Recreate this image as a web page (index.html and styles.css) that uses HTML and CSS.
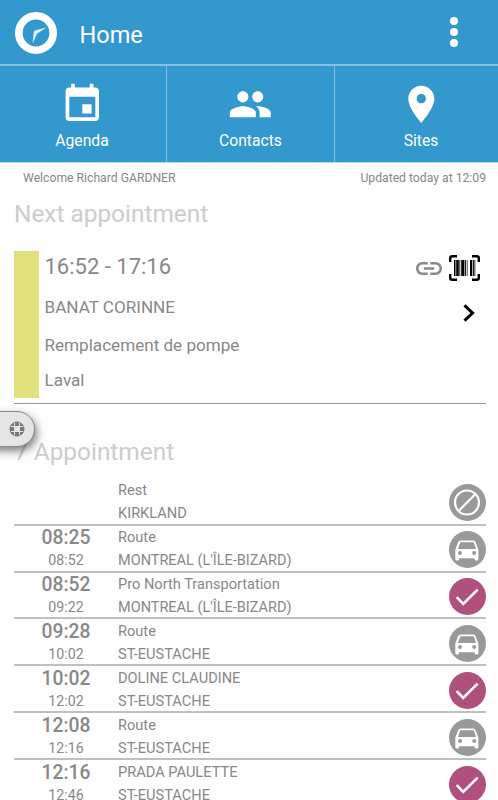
FILE: index.html
```html
<!DOCTYPE html>
<html lang="en">
<head>
<meta charset="utf-8">
<title>Home</title>
<link rel="stylesheet" href="styles.css">
</head>
<body>
<svg class="sprite" aria-hidden="true">
  <symbol id="off" viewBox="0 0 37 37"><circle cx="18.5" cy="18.5" r="18.5" fill="#999"/><circle cx="18" cy="18.5" r="12" fill="none" stroke="#fff" stroke-width="2.2"/><path d="M10 26.5L26 10.5" stroke="#fff" stroke-width="2.2"/></symbol>
  <symbol id="car" viewBox="0 0 37 37"><circle cx="18.5" cy="18.5" r="18.5" fill="#999"/><path fill="#fff" fill-rule="evenodd" d="M10.500 10Q11 9.500 12 9.500h12.500q1.500 0 2 1.500l2.900 7.800v9.500q0 1.200-1.200 1.200h-1.300q-1.200 0-1.200-1.200V27.300H10v1q0 1.200-1.200 1.200H7.500q-1.200 0-1.200-1.200v-9.500l2.800-7.500q.4-1 1.400-1.300zM11.300 11.300l-2.400 6.700h18.200l-2.400-6.700zM11 20a2 2 0 1 0 0 4 2 2 0 0 0 0-4zm14.200 0a2 2 0 1 0 0 4 2 2 0 0 0 0-4z"/></symbol>
  <symbol id="done" viewBox="0 0 37 37"><circle cx="18.5" cy="18.500" r="18.5" fill="#b0507f"/><path d="M7.700 19.200l6.500 6.800L28.600 11.700" fill="none" stroke="#fff" stroke-width="2.600"/></symbol>
</svg>
<header class="topbar">
  <svg class="logo" viewBox="0 0 42 42"><circle cx="21" cy="21" r="17.200" fill="none" stroke="#fff" stroke-width="7.600"/><path d="M31.500 15.500L20.500 18.300Q19 18.800 18.800 20L17.500 31.500 22 21.700z" fill="#fff" fill-opacity=".85"/></svg>
  <h1 class="title">Home</h1>
  <svg class="more" viewBox="0 0 10 32"><circle cx="5" cy="5" r="4"/><circle cx="5" cy="16" r="4"/><circle cx="5" cy="27" r="4"/></svg>
</header>
<nav class="tabs">
  <a class="tab tab-first"><svg viewBox="0 0 24 24"><path d="M17 12h-5v5h5v-5zM16 1v2H8V1H6v2H5c-1.110 0-1.990.9-1.990 2L3 19c0 1.100.89 2 2 2h14c1.100 0 2-.9 2-2V5c0-1.100-.9-2-2-2h-1V1h-2zm3 18H5V8h14v11z"/></svg><span>Agenda</span></a>
  <a class="tab"><svg viewBox="0 0 24 24"><path d="M16 11c1.660 0 2.990-1.340 2.990-3S17.660 5 16 5c-1.660 0-3 1.340-3 3s1.340 3 3 3zm-8 0c1.660 0 2.990-1.340 2.990-3S9.660 5 8 5C6.340 5 5 6.340 5 8s1.340 3 3 3zm0 2c-2.330 0-7 1.170-7 3.500V19h14v-2.500c0-2.330-4.670-3.500-7-3.500zm8 0c-.29 0-.62.020-.97.050 1.160.84 1.970 1.970 1.970 3.450V19h6v-2.500c0-2.330-4.670-3.500-7-3.500z"/></svg><span>Contacts</span></a>
  <a class="tab tab-last"><svg viewBox="0 0 24 24"><path d="M12 2C8.130 2 5 5.130 5 9c0 5.250 7 13 7 13s7-7.750 7-13c0-3.870-3.130-7-7-7zm0 9.500c-1.380 0-2.500-1.120-2.500-2.500s1.120-2.500 2.500-2.500 2.500 1.120 2.500 2.500-1.120 2.500-2.500 2.500z"/></svg><span>Sites</span></a>
</nav>
<div class="status"><span class="welcome">Welcome Richard GARDNER</span><span class="updated">Updated today at 12:09</span></div>
<main class="content">
  <h2 class="heading heading-next">Next appointment</h2>
  <section class="next">
    <div class="stripe"></div>
    <div class="details">
      <div class="slot">16:52 - 17:16</div>
      <div class="line customer">BANAT CORINNE</div>
      <div class="line job">Remplacement de pompe</div>
      <div class="line city">Laval</div>
    </div>
    <div class="actions">
      <div class="tools">
        <svg class="link" viewBox="2 7 20 10"><path d="M3.900 12c0-1.710 1.390-3.100 3.100-3.100h4V7H7c-2.760 0-5 2.240-5 5s2.240 5 5 5h4v-1.900H7c-1.710 0-3.100-1.390-3.100-3.100zM8 13h8v-2H8v2zm9-6h-4v1.900h4c1.710 0 3.100 1.390 3.100 3.100s-1.390 3.100-3.100 3.100h-4V17h4c2.760 0 5-2.240 5-5s-2.240-5-5-5z"/></svg>
        <svg class="barcode" viewBox="0 0 31 26"><path d="M1.200 7V3.200q0-2 2-2H8M23 1.200h4.800q2 0 2 2V7M1.200 19v3.800q0 2 2 2H8M23 24.800h4.800q2 0 2-2V19" fill="none" stroke="#000" stroke-width="2.400"/><path d="M5 5h1.500v16H5zM7.200 5h2.600v16H7.200zM10.400 5h.8v16h-.8zM12.200 5h3.200v16h-3.200zM16.100 5h1v16h-1zM17.900 5h.6v16h-.6zM21 5h2.200v16H21zM23.900 5h1v16h-1zM25.500 5h.8v16h-.8z"/></svg>
      </div>
      <svg class="chevron" viewBox="0 0 12 18"><path d="M1.500 1.300L9.600 9l-8.100 7.700" fill="none" stroke="#000" stroke-width="3"/></svg>
    </div>
  </section>
  <h2 class="heading heading-list">7 Appointment</h2>
  <ul class="list">
    <li class="row"><div class="times"></div><div class="info"><span>Rest</span><span>KIRKLAND</span></div><svg class="badge"><use href="#off"/></svg></li>
    <li class="row"><div class="times"><b>08:25</b><span>08:52</span></div><div class="info"><span>Route</span><span class="long">MONTREAL (L'ÎLE-BIZARD)</span></div><svg class="badge"><use href="#car"/></svg></li>
    <li class="row"><div class="times"><b>08:52</b><span>09:22</span></div><div class="info"><span>Pro North Transportation</span><span class="long">MONTREAL (L'ÎLE-BIZARD)</span></div><svg class="badge"><use href="#done"/></svg></li>
    <li class="row"><div class="times"><b>09:28</b><span>10:02</span></div><div class="info"><span>Route</span><span>ST-EUSTACHE</span></div><svg class="badge"><use href="#car"/></svg></li>
    <li class="row"><div class="times"><b>10:02</b><span>12:02</span></div><div class="info"><span>DOLINE CLAUDINE</span><span>ST-EUSTACHE</span></div><svg class="badge"><use href="#done"/></svg></li>
    <li class="row"><div class="times"><b>12:08</b><span>12:16</span></div><div class="info"><span>Route</span><span>ST-EUSTACHE</span></div><svg class="badge"><use href="#car"/></svg></li>
    <li class="row"><div class="times"><b>12:16</b><span>12:46</span></div><div class="info"><span>PRADA PAULETTE</span><span>ST-EUSTACHE</span></div><svg class="badge"><use href="#done"/></svg></li>
  </ul>
</main>
<div class="help"><svg viewBox="0 0 16 16"><circle cx="8" cy="8" r="5.100" fill="none" stroke="#777" stroke-width="4"/><path d="M5.500 1v14M10.500 1v14M1 5.500h14M1 10.500h14" stroke="#e5e5e5" stroke-width="1"/><circle cx="8" cy="8" r="7" fill="none" stroke="#777" stroke-width="1"/></svg></div>
</body>
</html>
```
FILE: styles.css
```css
* { box-sizing: border-box; }
html { height: 100%; overflow: hidden; }
body { margin: 0; height: 800px; overflow: hidden; position: relative; background: #fefefe; color: #888; font-family: Roboto, sans-serif; }
.sprite { display: none; }
svg { display: block; flex: none; }

.topbar { height: 66px; padding: 0 39px 0 15px; display: flex; align-items: center; background: #3398ce; border-bottom: 2px solid #84bfdf; color: #fff; }
.logo { width: 42px; height: 42px; margin-top: 2px; }
.title { margin: 6px 0 0 22.500px; font-size: 23.500px; font-weight: 400; line-height: 30px; }
.more { width: 10px; height: 32px; margin-left: auto; fill: #fff; }

.tabs { height: 97px; display: grid; grid-template-columns: 167px 168px 1fr; background: #3398ce; border-bottom: 1px solid #b5d8eb; color: #fff; }
.tab { display: flex; flex-direction: column; align-items: center; padding-top: 16.400px; border-right: 1px solid #84bfdf; }
.tab-first { padding-right: 2px; }
.tab-last { border-right: 0; padding-left: 9px; }
.tab svg { width: 44.600px; height: 44.600px; fill: #fff; }
.tab span { margin-top: 4px; font-size: 15.700px; line-height: 20px; }

.status { height: 28px; padding: 0 12px 0 23px; display: flex; justify-content: space-between; font-size: 12.200px; line-height: 30px; }
.content { padding: 0 12px 0 14px; }
.heading { margin: 0; font-size: 24.400px; font-weight: 400; line-height: 30px; color: #ccc; }
.heading-next { padding-top: 8px; height: 60px; }

.next { height: 153px; display: flex; border-bottom: 1px solid #999; }
.stripe { width: 25px; height: 147px; background: #e0e07d; }
.details { flex: 1; padding-left: 5.500px; }
.slot { height: 38px; font-size: 22px; line-height: 31px; }
.line { font-size: 17.100px; line-height: 36px; }
.customer { height: 38px; }
.job { height: 36px; }
.city { line-height: 34px; }
.actions { padding-top: 4px; }
.tools { display: flex; align-items: center; gap: 7px; padding-right: 6px; }
.link { width: 26px; height: 13px; fill: #888; }
.barcode { width: 31px; height: 26px; }
.chevron { width: 12px; height: 18px; margin: 23px 0 0 46.500px; }

.heading-list { padding-top: 33px; height: 74.800px; }
.list { margin: 0; padding: 0; list-style: none; }
.row { height: 46.900px; display: flex; border-bottom: 2px solid #c0c0c0; }
.times { width: 104px; display: flex; flex-direction: column; align-items: center; padding-top: .5px; }
.times b { font-size: 19.300px; font-weight: 500; line-height: 23px; }
.times span { font-size: 14.200px; line-height: 23px; }
.info { flex: 1; display: flex; flex-direction: column; font-size: 14.600px; line-height: 23px; padding-top: .5px; }
.info .long { font-size: 14.500px; }
.badge { width: 37px; height: 37px; margin-top: 5.500px; }

.help { position: absolute; left: -20px; top: 411px; width: 55px; height: 36px; padding: 9px 0 0 27.500px; background: #e5e5e5; border: 1px solid #888; border-radius: 18px; box-shadow: 2px 4px 8px rgba(0,0,0,.5); }
.help svg { width: 16px; height: 16px; }
```
